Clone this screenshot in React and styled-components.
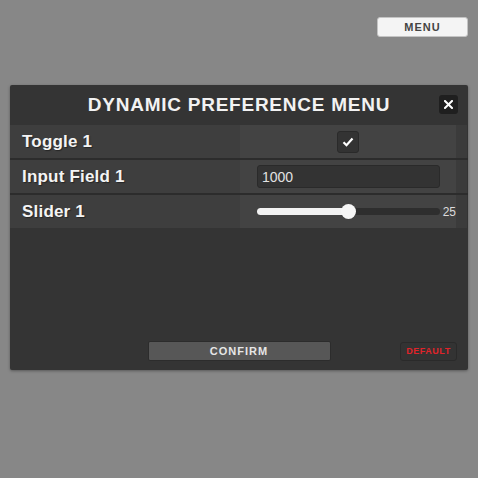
import React, { useState } from "react";
import styled, { createGlobalStyle } from "styled-components";

const GlobalStyle = createGlobalStyle`
  html, body {
    margin: 0;
    padding: 0;
    background: #878787;
    font-family: "Liberation Sans", Arial, sans-serif;
  }
  * { box-sizing: border-box; }
`;

const Page = styled.div`
  width: 478px;
  height: 478px;
  padding: 17px 10px 0 10px;
  display: flex;
  flex-direction: column;
`;

const TopBar = styled.div`
  display: flex;
  justify-content: flex-end;
`;

const MenuButton = styled.button`
  width: 91px;
  height: 20px;
  padding: 0;
  background: #f4f4f4;
  border: 1px solid #c4c4c4;
  border-radius: 3px;
  color: #444;
  font-family: inherit;
  font-size: 11px;
  font-weight: bold;
  letter-spacing: 1px;
`;

const Panel = styled.div`
  margin-top: 48px;
  height: 285px;
  background: #343434;
  border-radius: 2px;
  box-shadow: 0 1px 3px rgba(0, 0, 0, 0.35);
  display: flex;
  flex-direction: column;
`;

const Header = styled.div`
  height: 40px;
  display: flex;
  align-items: center;
  justify-content: center;
  position: relative;
`;

const Title = styled.h1`
  margin: 0;
  color: #f2f2f2;
  font-size: 19px;
  font-weight: 600;
  letter-spacing: 0.75px;
`;

const CloseButton = styled.button`
  position: absolute;
  right: 10px;
  top: 10px;
  width: 19px;
  height: 19px;
  padding: 0;
  border: none;
  border-radius: 3px;
  background: #1f1f1f;
  display: flex;
  align-items: center;
  justify-content: center;
`;

const Rows = styled.div`
  display: flex;
  flex-direction: column;
`;

const Row = styled.div`
  display: grid;
  grid-template-columns: 230px 216px 1fr;
  height: ${(p) => (p.$last ? 33 : 35)}px;
  border-bottom: ${(p) => (p.$last ? "none" : "2px solid #2c2c2c")};
`;

const Label = styled.div`
  background: #3e3e3e;
  display: flex;
  align-items: center;
  padding-left: 12px;
  color: #f4f4f4;
  font-size: 17px;
  font-weight: 600;
  letter-spacing: 0.2px;
  text-shadow: 1px 1px 1px rgba(0, 0, 0, 0.4);
`;

const Control = styled.div`
  background: #434343;
  display: flex;
  align-items: center;
  justify-content: ${(p) => (p.$center ? "center" : "flex-start")};
  padding-left: ${(p) => (p.$center ? 0 : 17)}px;
`;

const Edge = styled.div`
  background: #3b3b3b;
  margin-right: 1px;
`;

const CheckBox = styled.button`
  width: 22px;
  height: 22px;
  padding: 0;
  background: #333;
  border: 1px solid #2a2a2a;
  border-radius: 3px;
  display: flex;
  align-items: center;
  justify-content: center;
`;

const TextInput = styled.input`
  width: 183px;
  height: 23px;
  background: #333;
  border: 1px solid #2a2a2a;
  border-radius: 3px;
  color: #e2e2e2;
  font-family: inherit;
  font-size: 14px;
  padding: 0 4px;
  outline: none;
`;

const SliderWrap = styled.div`
  display: flex;
  align-items: center;
  width: 100%;
`;

const Track = styled.div`
  position: relative;
  width: 183px;
  height: 7px;
  border-radius: 4px;
  background: #2e2e2e;
`;

const Fill = styled.div`
  height: 100%;
  border-radius: 4px;
  background: #f2f2f2;
`;

const Thumb = styled.div`
  position: absolute;
  top: 50%;
  width: 15px;
  height: 15px;
  margin-left: -7px;
  margin-top: -7.5px;
  border-radius: 50%;
  background: #f6f6f6;
`;

const SliderValue = styled.span`
  margin-left: 3px;
  color: #dcdcdc;
  font-size: 12px;
`;

const Spacer = styled.div`
  flex: 1;
`;

const Footer = styled.div`
  display: grid;
  grid-template-columns: 1fr auto 1fr;
  align-items: center;
  padding: 0 11px 9px 11px;
`;

const ConfirmButton = styled.button`
  grid-column: 2;
  width: 183px;
  height: 20px;
  padding: 0;
  background: #575757;
  border: 1px solid #2c2c2c;
  border-radius: 2px;
  color: #e6e6e6;
  font-family: inherit;
  font-size: 11px;
  font-weight: bold;
  letter-spacing: 1px;
`;

const DefaultButton = styled.button`
  grid-column: 3;
  justify-self: end;
  width: 57px;
  height: 19px;
  padding: 0;
  background: #333;
  border: 1px solid #2a2a2a;
  border-radius: 3px;
  color: #e0242a;
  font-family: inherit;
  font-size: 9px;
  font-weight: bold;
  letter-spacing: 0.5px;
`;

export default function App() {
  const [checked, setChecked] = useState(true);
  const [value, setValue] = useState("1000");
  const slider = 25;
  const pct = 50;

  return (
    <>
      <GlobalStyle />
      <Page>
        <TopBar>
          <MenuButton>MENU</MenuButton>
        </TopBar>
        <Panel>
          <Header>
            <Title>DYNAMIC PREFERENCE MENU</Title>
            <CloseButton aria-label="close">
              <svg width="9" height="9" viewBox="0 0 9 9">
                <path d="M1 1 L8 8 M8 1 L1 8" stroke="#fff" strokeWidth="2" strokeLinecap="square" />
              </svg>
            </CloseButton>
          </Header>
          <Rows>
            <Row>
              <Label>Toggle 1</Label>
              <Control $center>
                <CheckBox onClick={() => setChecked(!checked)}>
                  {checked && (
                    <svg width="12" height="10" viewBox="0 0 12 10">
                      <path d="M1.5 5.2 L4.5 8.2 L10.5 1.5" fill="none" stroke="#fff" strokeWidth="2.2" />
                    </svg>
                  )}
                </CheckBox>
              </Control>
              <Edge />
            </Row>
            <Row>
              <Label>Input Field 1</Label>
              <Control>
                <TextInput value={value} onChange={(e) => setValue(e.target.value)} />
              </Control>
              <Edge />
            </Row>
            <Row $last>
              <Label>Slider 1</Label>
              <Control>
                <SliderWrap>
                  <Track>
                    <Fill style={{ width: `${pct}%` }} />
                    <Thumb style={{ left: `${pct}%` }} />
                  </Track>
                  <SliderValue>{slider}</SliderValue>
                </SliderWrap>
              </Control>
              <Edge />
            </Row>
          </Rows>
          <Spacer />
          <Footer>
            <ConfirmButton>CONFIRM</ConfirmButton>
            <DefaultButton>DEFAULT</DefaultButton>
          </Footer>
        </Panel>
      </Page>
    </>
  );
}
